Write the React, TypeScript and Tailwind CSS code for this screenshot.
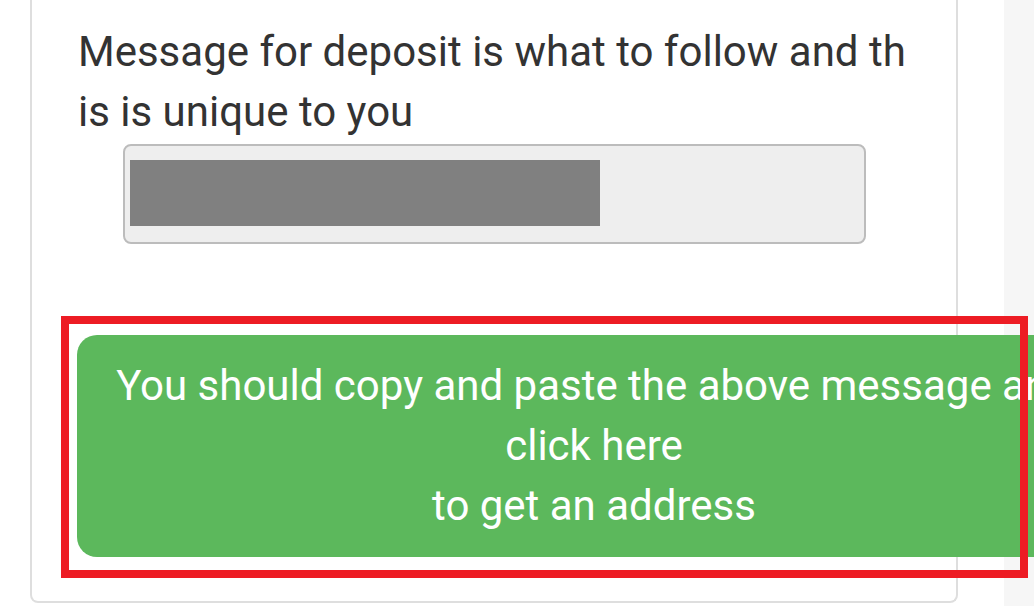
export default function App() {
  return (
    <div className="relative flex h-[606px] w-[1034px] overflow-hidden bg-white font-['Roboto',sans-serif]">
      {/* main column */}
      <div className="relative z-10 w-[1004px] shrink-0 pl-[30px]">
        <div className="h-[603px] w-[928px] rounded-b-[8px] border-2 border-t-0 border-[#dedede] pt-[22px]">
          <p className="whitespace-nowrap pl-[46px] text-[42px] leading-[60px] text-[#333333]">
            Message for deposit is what to follow and th
            <br />
            is is unique to you
          </p>

          {/* message box (redacted) */}
          <div className="mx-auto mt-[2px] h-[100px] w-[743px] rounded-[8px] border-2 border-[#bcbcbc] bg-[#eeeeee] pl-[5px] pt-[14px]">
            <div className="h-[66px] w-[470px] bg-[#808080]" />
          </div>

          <button className="ml-[45px] mt-[91px] h-[222px] w-[1034px] rounded-[20px] bg-[#5cb85c] text-center text-[42px] leading-[60px] whitespace-nowrap text-white">
            You should copy and paste the above message and
            <br />
            click here
            <br />
            to get an address
          </button>
        </div>
      </div>

      {/* side strip */}
      <div className="flex-1 bg-[#f6f6f6]" />

      {/* annotation */}
      <div className="pointer-events-none absolute left-[61px] top-[316px] z-20 h-[262px] w-[967px] border-8 border-[#ed1c24]" />
    </div>
  );
}
